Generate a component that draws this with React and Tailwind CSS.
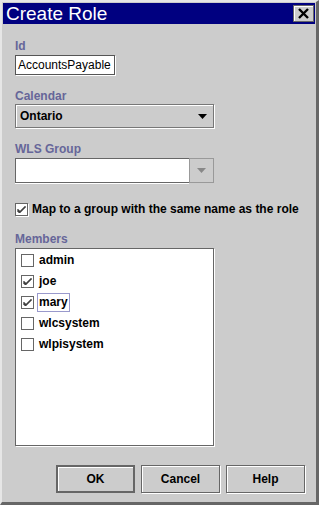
import { useState } from "react";

const members = [
  { name: "admin", checked: false },
  { name: "joe", checked: true },
  { name: "mary", checked: true, focus: true },
  { name: "wlcsystem", checked: false },
  { name: "wlpisystem", checked: false },
];

function Check({ on }) {
  return (
    <span className="w-[13px] h-[13px] shrink-0 border border-[#666666] bg-white shadow-[1px_1px_0_#ffffff] flex items-center justify-center">
      {on && (
        <svg width="9" height="9" viewBox="0 0 9 9">
          <path d="M1 4 L1 7 M2 5 L2 8 M3 6 L3 8 M4 5 L4 7 M5 4 L5 6 M6 3 L6 5 M7 2 L7 4 M8 1 L8 3" stroke="#000" strokeWidth="1" fill="none" />
        </svg>
      )}
    </span>
  );
}

function Label({ children, className = "" }) {
  return (
    <div className={"text-[12px] leading-[14px] font-bold text-[#666699] " + className}>
      {children}
    </div>
  );
}

function Btn({ children, def }) {
  return (
    <button
      className={
        "w-[79px] h-[28px] bg-[#cccccc] text-[12px] font-bold text-black flex items-center justify-center " +
        (def
          ? "border-2 border-[#666666] shadow-[inset_1px_1px_0_#ffffff]"
          : "border border-[#666666] shadow-[inset_1px_1px_0_#ffffff,1px_1px_0_#ffffff]")
      }
    >
      {children}
    </button>
  );
}

export default function App() {
  const [list] = useState(members);

  return (
    <div
      className="w-[319px] h-[505px] bg-[#cccccc] flex flex-col border-l-2 border-t-2 border-l-[#e6e6e6] border-t-[#e6e6e6] border-r-[3px] border-b-[3px] border-r-[#666666] border-b-[#666666] text-black"
      style={{ fontFamily: '"Liberation Sans", Arial, sans-serif' }}
    >
      {/* title bar */}
      <div className="mx-[1px] mt-[1px] h-[21px] bg-[#000080] flex items-center justify-between pl-[3px] pr-[1px]">
        <span className="text-white text-[19px] leading-[20px]">Create Role</span>
        <span className="w-[21px] h-[17px] bg-[#cccccc] border border-[#666666] shadow-[inset_1px_1px_0_#ffffff] flex items-center justify-center">
          <svg width="11" height="11" viewBox="0 0 11 11">
            <path d="M1 1 L10 10 M10 1 L1 10" stroke="#000" strokeWidth="2.4" />
          </svg>
        </span>
      </div>

      <div className="flex flex-col pl-[13px] pt-[15px]">
        <Label>Id</Label>
        <div className="mt-[2px] w-[100px] h-[20px] bg-white border border-[#555555] shadow-[1px_1px_0_#ffffff] flex items-center pl-[2px] text-[12px]">
          AccountsPayable
        </div>

        <Label className="mt-[14px]">Calendar</Label>
        <div className="mt-[1px] w-[199px] h-[24px] border border-[#777777] shadow-[inset_1px_1px_0_#ffffff,1px_1px_0_#ffffff] flex items-center justify-between pl-[4px] pr-[6px]">
          <span className="text-[12px] font-bold">Ontario</span>
          <svg width="9" height="5" viewBox="0 0 9 5">
            <path d="M0 0 H9 L4.5 5 Z" fill="#000" />
          </svg>
        </div>

        <Label className="mt-[14px]">WLS Group</Label>
        <div className="mt-[2px] w-[199px] h-[25px] flex">
          <div className="flex-1 bg-white border border-[#666666] border-r-0 shadow-[0_1px_0_#ffffff]" />
          <div className="w-[25px] border border-[#999999] flex items-center justify-center">
            <svg width="9" height="5" viewBox="0 0 9 5">
              <path d="M0 0 H9 L4.5 5 Z" fill="#888888" />
            </svg>
          </div>
        </div>

        <div className="mt-[19px] flex items-center gap-[4px] h-[14px]">
          <Check on />
          <span className="text-[12px] font-bold">Map to a group with the same name as the role</span>
        </div>

        <Label className="mt-[16px]">Members</Label>
        <div className="mt-[2px] w-[199px] h-[198px] bg-white border border-[#666666] shadow-[1px_1px_0_#ffffff] pt-[1px] pl-[5px] flex flex-col">
          {list.map((m) => (
            <div key={m.name} className="h-[21px] flex items-center">
              <Check on={m.checked} />
              <span
                className={
                  "ml-[3px] text-[12px] font-bold leading-[17px] px-[1px] " +
                  (m.focus ? "border border-[#9999cc]" : "border border-transparent")
                }
              >
                {m.name}
              </span>
            </div>
          ))}
        </div>
      </div>

      <div className="mt-[19px] flex gap-[6px] pl-[54px]">
        <Btn def>OK</Btn>
        <Btn>Cancel</Btn>
        <Btn>Help</Btn>
      </div>
    </div>
  );
}
